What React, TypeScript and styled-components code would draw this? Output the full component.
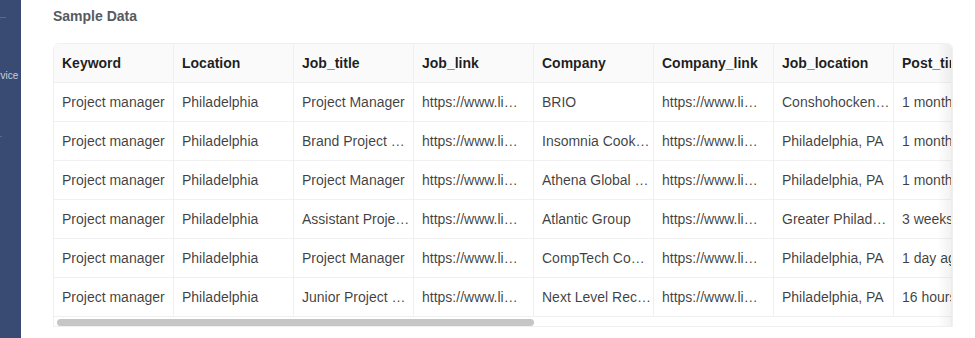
import React from "react";
import styled, { createGlobalStyle } from "styled-components";

const Global = createGlobalStyle`
  html, body { margin: 0; padding: 0; background: #ffffff; }
  body { font-family: "Segoe UI", "Liberation Sans", Arial, sans-serif; }
  #root { height: 338px; }
`;

const Page = styled.div`
  display: flex;
  height: 338px;
  width: 975px;
  overflow: hidden;
`;

const Sidebar = styled.aside`
  width: 21px;
  flex: none;
  background: #394b72;
  display: flex;
  flex-direction: column;
  overflow: hidden;
`;

const SideRule = styled.div<{ $w: number; $top: number }>`
  height: 1px;
  width: ${(p) => p.$w}px;
  margin-top: ${(p) => p.$top}px;
  background: #5a6a8c;
`;

const SideLabel = styled.div`
  margin-top: 51px;
  margin-left: -15px;
  font-size: 10px;
  line-height: 14px;
  color: #c7cfde;
  white-space: nowrap;
`;

const Main = styled.main`
  flex: 1;
  padding: 5px 0 0 32px;
  min-width: 0;
`;

const Title = styled.h3`
  margin: 0 0 16px;
  font-size: 14px;
  line-height: 22px;
  font-weight: 600;
  color: #555a60;
`;

const TableWrap = styled.div`
  position: relative;
  width: 898px;
  border: 1px solid #f0f0f0;
  border-radius: 6px 6px 0 0;
  overflow: hidden;
`;

const Grid = styled.table`
  border-collapse: separate;
  border-spacing: 0;
  table-layout: fixed;
  width: 1700px;
  font-size: 14px;
`;

const HeadCell = styled.th`
  box-sizing: border-box;
  height: 39px;
  padding: 0 8px;
  text-align: left;
  font-weight: 600;
  color: rgba(0, 0, 0, 0.88);
  background: #fafafa;
  border-bottom: 1px solid #f0f0f0;
  border-right: 1px solid #f0f0f0;
  white-space: nowrap;
  overflow: hidden;
`;

const Cell = styled.td`
  box-sizing: border-box;
  height: 39px;
  padding: 0 8px;
  color: rgba(0, 0, 0, 0.76);
  border-bottom: 1px solid #f0f0f0;
  border-right: 1px solid #f0f0f0;
  white-space: nowrap;
  overflow: hidden;
`;

const ScrollTrack = styled.div`
  height: 9px;
  padding: 2px 3px 0;
  box-sizing: border-box;
  background: #ffffff;
`;

const ScrollThumb = styled.div`
  width: 477px;
  height: 7px;
  border-radius: 4px;
  background: #c6c6c6;
`;

const EdgeShadow = styled.div`
  position: absolute;
  top: 0;
  right: 0;
  bottom: 0;
  width: 14px;
  pointer-events: none;
  background: linear-gradient(to right, rgba(0, 0, 0, 0), rgba(0, 0, 0, 0.05));
  border-right: 1px solid #ececec;
`;

const headers = [
  "Keyword",
  "Location",
  "Job_title",
  "Job_link",
  "Company",
  "Company_link",
  "Job_location",
  "Post_time",
  "Applicants",
];

const rows: string[][] = [
  ["Project manager", "Philadelphia", "Project Manager", "https://www.li…", "BRIO", "https://www.li…", "Conshohocken…", "1 month ago", "25 applicants"],
  ["Project manager", "Philadelphia", "Brand Project …", "https://www.li…", "Insomnia Cook…", "https://www.li…", "Philadelphia, PA", "1 month ago", "40 applicants"],
  ["Project manager", "Philadelphia", "Project Manager", "https://www.li…", "Athena Global …", "https://www.li…", "Philadelphia, PA", "1 month ago", "31 applicants"],
  ["Project manager", "Philadelphia", "Assistant Proje…", "https://www.li…", "Atlantic Group", "https://www.li…", "Greater Philad…", "3 weeks ago", "12 applicants"],
  ["Project manager", "Philadelphia", "Project Manager", "https://www.li…", "CompTech Co…", "https://www.li…", "Philadelphia, PA", "1 day ago", "8 applicants"],
  ["Project manager", "Philadelphia", "Junior Project …", "https://www.li…", "Next Level Rec…", "https://www.li…", "Philadelphia, PA", "16 hours ago", "3 applicants"],
];

export default function App() {
  return (
    <Page>
      <Global />
      <Sidebar>
        <SideRule $w={6} $top={17} />
        <SideLabel>Service</SideLabel>
        <SideRule $w={2} $top={53} />
      </Sidebar>
      <Main>
        <Title>Sample Data</Title>
        <TableWrap>
          <Grid>
            <colgroup>
              {headers.map((h, i) => (
                <col key={h} style={{ width: i === headers.length - 1 ? 740 : 120 }} />
              ))}
            </colgroup>
            <thead>
              <tr>
                {headers.map((h) => (
                  <HeadCell key={h}>{h}</HeadCell>
                ))}
              </tr>
            </thead>
            <tbody>
              {rows.map((r, i) => (
                <tr key={i}>
                  {r.map((c, j) => (
                    <Cell key={j}>{c}</Cell>
                  ))}
                </tr>
              ))}
            </tbody>
          </Grid>
          <ScrollTrack>
            <ScrollThumb />
          </ScrollTrack>
          <EdgeShadow />
        </TableWrap>
      </Main>
    </Page>
  );
}
